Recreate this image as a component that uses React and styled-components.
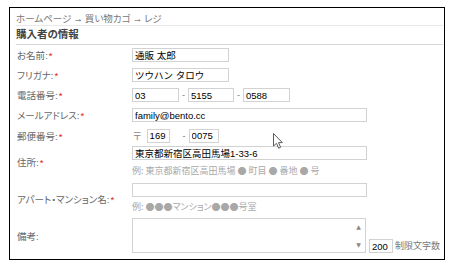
import React from "react";
import styled, { createGlobalStyle } from "styled-components";

const GlobalStyle = createGlobalStyle`
  * {
    box-sizing: border-box;
  }
  body {
    margin: 0;
    background: #ffffff;
    font-family: "Liberation Sans", "Noto Sans CJK JP", sans-serif;
  }
`;

const Page = styled.div`
  position: relative;
  width: 453px;
  height: 265px;
  padding: 7px 0 0 9px;
`;

const Panel = styled.div`
  width: 436px;
  border: 1px solid #000000;
  padding: 0 1px 4px 6px;
  font-feature-settings: "palt";
`;

const Breadcrumb = styled.div`
  height: 18px;
  padding-top: 5px;
  line-height: 12px;
  font-size: 9.5px;
  color: #777777;
  border-bottom: 1px solid #e8e8e8;
  span {
    color: #555555;
    margin: 0 2px;
  }
`;

const Heading = styled.h2`
  margin: 0;
  height: 19px;
  padding-top: 1px;
  line-height: 14px;
  font-size: 10.5px;
  font-weight: 700;
  color: #444444;
  border-bottom: 1px solid #d8d8d8;
`;

const Row = styled.div`
  display: flex;
  align-items: center;
  padding: ${(p) => p.$pt ?? 3}px 0 ${(p) => p.$pb ?? 3}px;
`;

const Label = styled.div`
  width: 116px;
  flex-shrink: 0;
  padding-left: 1px;
  font-size: 9.5px;
  color: #666666;
  em {
    font-style: normal;
    color: #e02020;
    margin-left: 1px;
  }
`;

const Field = styled.div`
  display: flex;
  flex-direction: column;
`;

const Inline = styled.div`
  display: flex;
  align-items: ${(p) => p.$align || "center"};
`;

const TextBox = styled.input`
  width: ${(p) => p.$w}px;
  height: 14px;
  margin: 0;
  padding: 0 2px;
  border: 1px solid #d2d2d2;
  font-family: "Liberation Sans", "Noto Sans CJK JP", sans-serif;
  font-size: 9.5px;
  color: #000000;
  background: #ffffff;
  outline: none;
`;

const Sep = styled.span`
  font-size: 9px;
  color: #777777;
  margin: 0 3px 0 ${(p) => p.$gap ?? 3}px;
`;

const Postmark = styled.span`
  font-size: 10px;
  color: #888888;
  margin: 0 5px 0 1px;
`;

const Hint = styled.div`
  margin-top: ${(p) => p.$mt}px;
  line-height: 14px;
  font-family: "Noto Sans CJK JP", sans-serif;
  font-size: 9px;
  color: #a8a8a8;
`;

const AreaBox = styled.div`
  display: flex;
  width: 234px;
  height: 35px;
  border: 1px solid #d2d2d2;
`;

const Area = styled.textarea`
  flex: 1;
  border: none;
  resize: none;
  outline: none;
  padding: 2px;
  font-family: "Liberation Sans", "Noto Sans CJK JP", sans-serif;
  font-size: 9.5px;
`;

const Scroll = styled.div`
  width: 13px;
  display: flex;
  flex-direction: column;
  justify-content: space-between;
  align-items: center;
  padding: 5px 0 4px;
  color: #8a8a8a;
  font-family: "DejaVu Sans", sans-serif;
  font-size: 6px;
  line-height: 6px;
`;

const Counter = styled(TextBox)`
  margin-left: 3px;
`;

const Note = styled.span`
  margin-left: 2px;
  font-size: 9px;
  color: #777777;
  line-height: 14px;
`;

const Pointer = styled.svg`
  position: absolute;
  left: 273px;
  top: 133px;
`;

function Req({ children }) {
  return (
    <Label>
      {children}:<em>*</em>
    </Label>
  );
}

export default function App() {
  return (
    <Page>
      <GlobalStyle />
      <Panel>
        <Breadcrumb>
          ホームページ<span>→</span>買い物カゴ<span>→</span>レジ
        </Breadcrumb>
        <Heading>購入者の情報</Heading>

        <Row>
          <Req>お名前</Req>
          <TextBox $w={97} defaultValue="通販 太郎" readOnly />
        </Row>
        <Row>
          <Req>フリガナ</Req>
          <TextBox $w={97} defaultValue="ツウハン タロウ" readOnly />
        </Row>
        <Row>
          <Req>電話番号</Req>
          <Inline>
            <TextBox $w={47} defaultValue="03" readOnly />
            <Sep>-</Sep>
            <TextBox $w={46} defaultValue="5155" readOnly />
            <Sep>-</Sep>
            <TextBox $w={47} defaultValue="0588" readOnly />
          </Inline>
        </Row>
        <Row>
          <Req>メールアドレス</Req>
          <TextBox $w={235} defaultValue="family@bento.cc" readOnly />
        </Row>
        <Row>
          <Req>郵便番号</Req>
          <Inline>
            <Postmark>〒</Postmark>
            <TextBox $w={23} defaultValue="169" readOnly />
            <Sep $gap={13}>-</Sep>
            <TextBox $w={30} defaultValue="0075" readOnly />
          </Inline>
        </Row>
        <Row $pt={0} $pb={3}>
          <Req>住所</Req>
          <Field>
            <TextBox $w={235} defaultValue="東京都新宿区高田馬場1-33-6" readOnly />
            <Hint $mt={4}>例: 東京都新宿区高田馬場 ● 町目 ● 番地 ● 号</Hint>
          </Field>
        </Row>
        <Row $pt={2} $pb={2}>
          <Req>アパート・マンション名</Req>
          <Field>
            <TextBox $w={235} readOnly />
            <Hint $mt={3}>例: ●●●マンション●●●号室</Hint>
          </Field>
        </Row>
        <Row $pt={2} $pb={2}>
          <Label>備考:</Label>
          <Inline $align="flex-end">
            <AreaBox>
              <Area readOnly />
              <Scroll>
                <span>▲</span>
                <span>▼</span>
              </Scroll>
            </AreaBox>
            <Inline>
              <Counter $w={24} defaultValue="200" readOnly />
              <Note>制限文字数</Note>
            </Inline>
          </Inline>
        </Row>
      </Panel>
      <Pointer width="12" height="17" viewBox="0 0 12 17">
        <path
          d="M0.5 0.5 L0.5 13 L3.5 10.3 L5.6 15.2 L7.6 14.3 L5.5 9.6 L9.3 9.6 Z"
          fill="#ffffff"
          stroke="#5a5a5a"
          strokeWidth="1"
          strokeLinejoin="round"
        />
      </Pointer>
    </Page>
  );
}
